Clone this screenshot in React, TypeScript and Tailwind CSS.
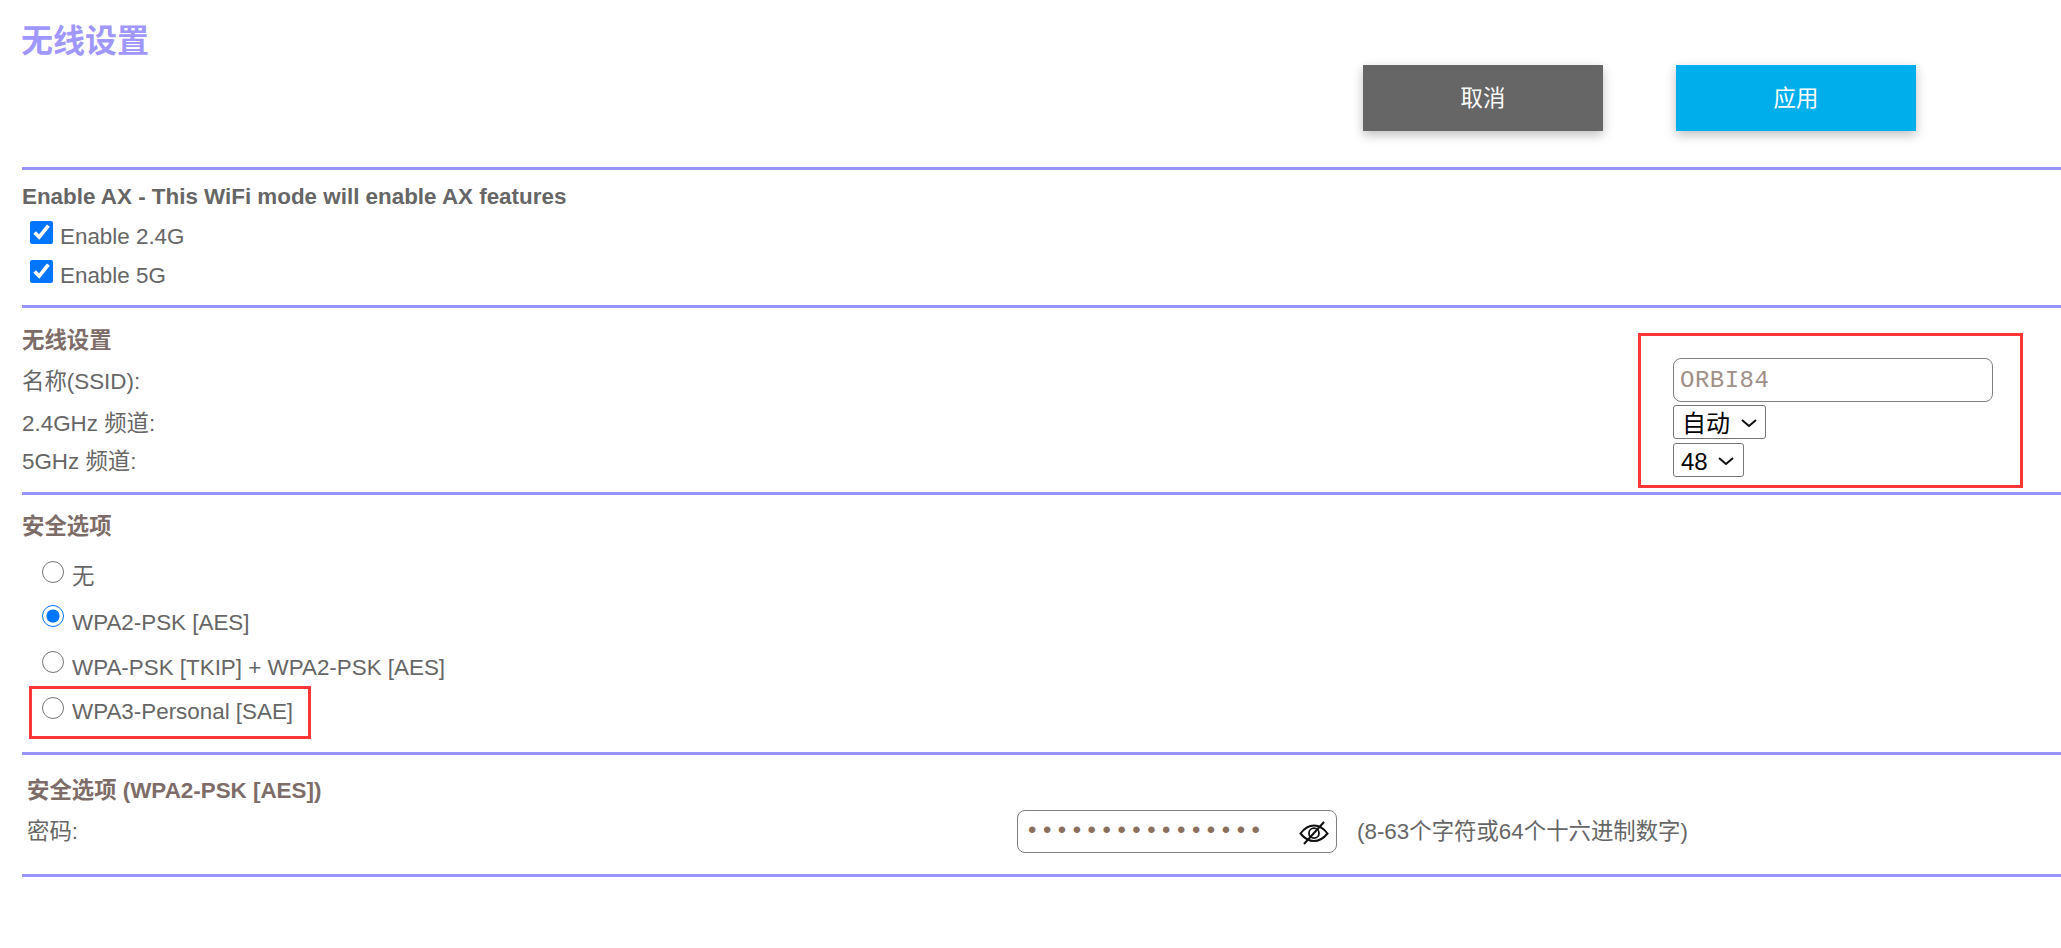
import { useState } from "react";

const sans = "font-['Liberation_Sans','Noto_Sans_CJK_SC',sans-serif]";

function EyeSlash() {
  return (
    <svg width="30" height="24" viewBox="0 0 30 24" fill="none" stroke="#111" className="absolute right-[8px] top-[11px]">
      <path d="M1.5 12.5C6 6.5 10 4.5 15 4.5s9 2 13.5 8C24 18 20 20 15 20S6 18 1.5 12.5Z" strokeWidth="2" />
      <circle cx="15" cy="12.2" r="5" strokeWidth="1.8" />
      <path d="M25 1 5 23" strokeWidth="2" />
    </svg>
  );
}

function Chevron({ right }: { right: string }) {
  return (
    <svg width="16" height="8" viewBox="0 0 16 8" fill="none" stroke="#111" strokeWidth="2" className={`pointer-events-none absolute top-[14px] ${right}`}>
      <path d="M1 1l7 6 7-6" />
    </svg>
  );
}

function Radio({ label, checked, onPick, top, lead = "leading-[45px]" }: { label: string; checked: boolean; onPick: () => void; top: string; lead?: string }) {
  return (
    <label className="flex h-full items-start">
      <input type="radio" name="security" checked={checked} onChange={onPick} className={`${top} m-0 h-[22px] w-[22px] shrink-0`} />
      <span className={`ml-2 ${lead}`}>{label}</span>
    </label>
  );
}

export default function App() {
  const [mode, setMode] = useState("wpa2");

  return (
    <div className={`${sans} min-h-[948px] bg-white text-[22.4px] text-[#666666]`}>
      <header className="flex h-[167px] items-start">
        <h1 className="mt-[20px] ml-[21px] w-[1342px] text-[32px] leading-[42px] font-bold text-[#a097ff]">无线设置</h1>
        <button className="mt-[65px] h-[66px] w-[240px] bg-[#666666] pt-[2px] text-white shadow-[0_4px_10px_rgba(0,0,0,0.25)]">取消</button>
        <button className="mt-[65px] ml-[73px] h-[66px] w-[240px] bg-[#00aeec] pt-[2px] text-white shadow-[0_4px_10px_rgba(0,0,0,0.25)]">应用</button>
      </header>

      <div className="ml-[22px]">
        <section className="border-y-[3px] border-[#9a94ff] pt-[10px] pb-[9px]">
          <h2 className="h-[34px] leading-[34px] font-bold text-[#666666]">Enable AX - This WiFi mode will enable AX features</h2>
          <div className="mt-[4px]">
            {["Enable 2.4G", "Enable 5G"].map((name) => (
              <label key={name} className="flex h-[39px] items-start pl-[8px]">
                <input type="checkbox" defaultChecked className="m-0 mt-[3px] h-[23px] w-[23px]" />
                <span className="ml-[7px] leading-[38px]">{name}</span>
              </label>
            ))}
          </div>
        </section>

        <section className="flex h-[187px] justify-between border-b-[3px] border-[#9a94ff] pt-[15px]">
          <div>
            <h2 className="h-[34px] leading-[36px] font-bold text-[#7d6c68]">无线设置</h2>
            <div className="mt-[5px] h-[40px] leading-[40px]">名称(SSID):</div>
            <div className="h-[42px] leading-[44px]">2.4GHz 频道:</div>
            <div className="h-[34px] leading-[36px]">5GHz 频道:</div>
          </div>
          <div className="mt-[10px] mr-[38px] flex h-[155px] w-[385px] flex-col items-start border-[3px] border-[#f93737] pt-[22px] pl-[32px]">
            <input
              defaultValue="ORBI84"
              className="h-[44px] w-[320px] rounded-[8px] border border-[#808080] px-[6px] font-['Liberation_Mono',monospace] text-[24px] tracking-[0.5px] text-[#a09088]"
            />
            <div className="relative mt-[3px] h-[34px] w-[93px]">
              <select defaultValue="auto" className="h-full w-full appearance-none rounded-[3px] border border-[#767676] pl-[8px] text-[24px] text-black">
                <option value="auto">自动</option>
              </select>
              <Chevron right="right-[9px]" />
            </div>
            <div className="relative mt-[4px] h-[34px] w-[71px]">
              <select defaultValue="48" className="h-full w-full appearance-none rounded-[3px] border border-[#767676] pl-[7px] text-[24px] text-black">
                <option value="48">48</option>
              </select>
              <Chevron right="right-[10px]" />
            </div>
          </div>
        </section>

        <section className="h-[260px] border-b-[3px] border-[#9a94ff] pt-[14px]">
          <h2 className="h-[34px] leading-[36px] font-bold text-[#7d6c68]">安全选项</h2>
          <div className="mt-[12px] pl-[20px]">
            <div className="h-[45px]">
              <Radio label="无" checked={mode === "none"} onPick={() => setMode("none")} top="mt-[6px]" lead="leading-[43px]" />
            </div>
            <div className="h-[45px]">
              <Radio label="WPA2-PSK [AES]" checked={mode === "wpa2"} onPick={() => setMode("wpa2")} top="mt-[5px]" />
            </div>
            <div className="h-[45px]">
              <Radio label="WPA-PSK [TKIP] + WPA2-PSK [AES]" checked={mode === "mixed"} onPick={() => setMode("mixed")} top="mt-[6px]" />
            </div>
          </div>
          <div className="mt-[-4px] ml-[7px] h-[53px] w-[282px] border-[3px] border-[#f93737] pl-[10px]">
            <Radio label="WPA3-Personal [SAE]" checked={mode === "wpa3"} onPick={() => setMode("wpa3")} top="mt-[8px]" />
          </div>
        </section>

        <section className="h-[122px] border-b-[3px] border-[#9a94ff] pt-[20px] pl-[5px]">
          <h2 className="h-[34px] leading-[32px] font-bold text-[#7d6c68]">安全选项 (WPA2-PSK [AES])</h2>
          <div className="mt-[1px] flex h-[43px] items-center">
            <label className="w-[990px]">密码:</label>
            <div className="relative h-[43px] w-[320px]">
              <input
                type="password"
                defaultValue="wirelesspassword"
                className="h-full w-full rounded-[8px] border border-[#808080] px-[7px] font-['Liberation_Mono',monospace] text-[24px] tracking-[0.5px] text-[#8a6f5c]"
              />
              <EyeSlash />
            </div>
            <span className="ml-[20px]">(8-63个字符或64个十六进制数字)</span>
          </div>
        </section>
      </div>
    </div>
  );
}
